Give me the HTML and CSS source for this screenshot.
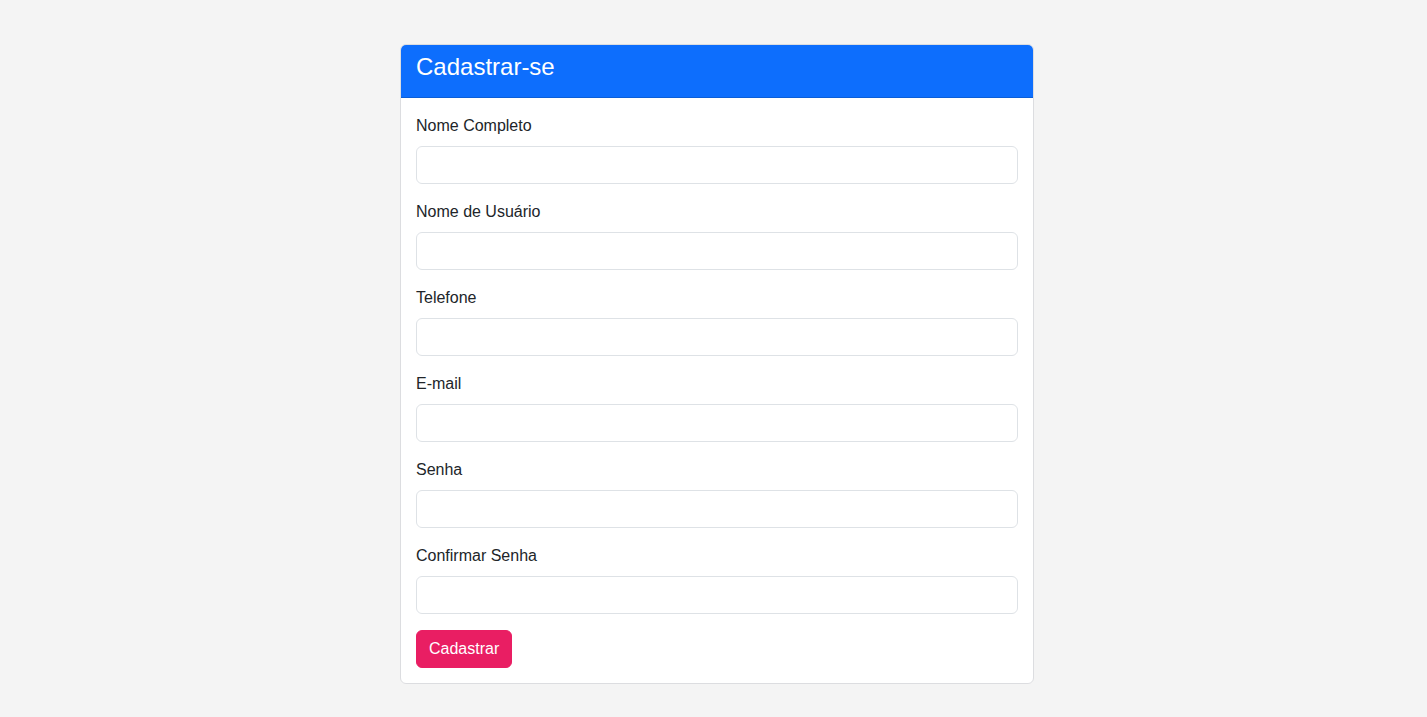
FILE: index.html
```html
<!DOCTYPE html>
<html lang="pt-BR">
<head>
<meta charset="utf-8">
<title>Cadastrar-se</title>
<link rel="stylesheet" href="styles.css">
</head>
<body>
<div class="page">
  <div class="card">
    <div class="card-header">
      <h4 class="card-title">Cadastrar-se</h4>
    </div>
    <form class="card-body">
      <div class="field">
        <label class="label" for="nome">Nome Completo</label>
        <input class="input" id="nome" type="text">
      </div>
      <div class="field">
        <label class="label" for="usuario">Nome de Usuário</label>
        <input class="input" id="usuario" type="text">
      </div>
      <div class="field">
        <label class="label" for="telefone">Telefone</label>
        <input class="input" id="telefone" type="text">
      </div>
      <div class="field">
        <label class="label" for="email">E-mail</label>
        <input class="input" id="email" type="email">
      </div>
      <div class="field">
        <label class="label" for="senha">Senha</label>
        <input class="input" id="senha" type="password">
      </div>
      <div class="field">
        <label class="label" for="confirmar">Confirmar Senha</label>
        <input class="input" id="confirmar" type="password">
      </div>
      <div class="actions">
        <button class="btn" type="button">Cadastrar</button>
      </div>
    </form>
  </div>
</div>
</body>
</html>
```
FILE: styles.css
```css
* { box-sizing: border-box; }
html, body { margin: 0; padding: 0; }
body {
  background: #f4f4f4;
  font-family: "Liberation Sans", Arial, sans-serif;
  font-size: 16px;
  line-height: 1.5;
  color: #212529;
}
.page {
  display: flex;
  justify-content: center;
  padding: 44px 0 0 7px;
}
.card {
  width: 634px;
  background: #fff;
  border: 1px solid #dcdde0;
  border-radius: 6px;
  overflow: hidden;
}
.card-header {
  background: #0d6efd;
  padding: 7px 15px 8px;
  border-bottom: 1px solid #0b5ed7;
}
.card-title {
  margin: 0 0 8px;
  font-size: 24px;
  font-weight: 400;
  line-height: 29px;
  color: #fff;
}
.card-body {
  padding: 16px 15px 15px;
  display: flex;
  flex-direction: column;
  gap: 16px;
  margin: 0;
}
.field {
  display: flex;
  flex-direction: column;
}
.label {
  display: block;
  margin-bottom: 8px;
  line-height: 24px;
}
.input {
  display: block;
  width: 100%;
  height: 38px;
  padding: 6px 12px;
  font: inherit;
  color: #212529;
  background: #fff;
  border: 1px solid #dee2e6;
  border-radius: 6px;
  outline: none;
}
.actions { display: flex; }
.btn {
  height: 38px;
  padding: 6px 12px;
  font: inherit;
  line-height: 24px;
  color: #fff;
  background: #e91e63;
  border: 1px solid #e91e63;
  border-radius: 6px;
  cursor: pointer;
}
```
